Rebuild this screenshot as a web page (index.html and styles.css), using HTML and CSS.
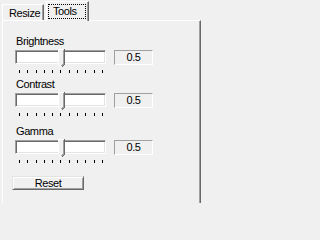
FILE: index.html
```html
<!DOCTYPE html>
<html>
<head>
<meta charset="utf-8">
<link rel="stylesheet" href="styles.css">
</head>
<body>
<div class="tabs">
  <div class="tab">Resize</div>
  <div class="tab active"><span class="focus">Tools</span></div>
</div>
<div class="panel">
  <div class="group g1">
    <div class="label">Brightness</div>
    <div class="row">
      <div class="track">
        <svg class="thumb" width="7" height="19" viewBox="0 0 7 19">
          <polygon points="0,0 7,0 7,15 3.5,18.5 0,15" fill="#f0f0f0"/>
          <path d="M0.5 15V0.5H6" stroke="#fff" fill="none"/>
          <path d="M0.5 15.5L3 18" stroke="#fff" fill="none"/>
          <path d="M5.5 1V15L3.5 17" stroke="#a0a0a0" fill="none"/>
          <path d="M6.5 0V15.5L3.5 18.5" stroke="#696969" fill="none"/>
        </svg>
      </div>
      <div class="value">0.5</div>
    </div>
    <div class="ticks"><i></i><i></i><i></i><i></i><i></i><i></i><i></i><i></i><i></i><i></i><i></i></div>
  </div>
  <div class="group g2">
    <div class="label">Contrast</div>
    <div class="row">
      <div class="track">
        <svg class="thumb" width="7" height="19" viewBox="0 0 7 19">
          <polygon points="0,0 7,0 7,15 3.5,18.5 0,15" fill="#f0f0f0"/>
          <path d="M0.5 15V0.5H6" stroke="#fff" fill="none"/>
          <path d="M0.5 15.5L3 18" stroke="#fff" fill="none"/>
          <path d="M5.5 1V15L3.5 17" stroke="#a0a0a0" fill="none"/>
          <path d="M6.5 0V15.5L3.5 18.5" stroke="#696969" fill="none"/>
        </svg>
      </div>
      <div class="value">0.5</div>
    </div>
    <div class="ticks"><i></i><i></i><i></i><i></i><i></i><i></i><i></i><i></i><i></i><i></i><i></i></div>
  </div>
  <div class="group g3">
    <div class="label">Gamma</div>
    <div class="row">
      <div class="track">
        <svg class="thumb" width="7" height="19" viewBox="0 0 7 19">
          <polygon points="0,0 7,0 7,15 3.5,18.5 0,15" fill="#f0f0f0"/>
          <path d="M0.5 15V0.5H6" stroke="#fff" fill="none"/>
          <path d="M0.5 15.5L3 18" stroke="#fff" fill="none"/>
          <path d="M5.5 1V15L3.5 17" stroke="#a0a0a0" fill="none"/>
          <path d="M6.5 0V15.5L3.5 18.5" stroke="#696969" fill="none"/>
        </svg>
      </div>
      <div class="value">0.5</div>
    </div>
    <div class="ticks"><i></i><i></i><i></i><i></i><i></i><i></i><i></i><i></i><i></i><i></i><i></i></div>
  </div>
  <button class="btn">Reset</button>
</div>
</body>
</html>
```

FILE: styles.css
```css
html, body {
  margin: 0;
  padding: 0;
  overflow: hidden;
  background: #f0f0f0;
}
body {
  width: 201px;
  height: 203px;
  font-family: "Liberation Sans", Arial, sans-serif;
  font-size: 11px;
  letter-spacing: -0.4px;
  color: #000;
  line-height: 12px;
}
.tabs {
  display: flex;
  align-items: flex-end;
  height: 20px;
  padding-left: 2px;
}
.tab {
  box-sizing: border-box;
  height: 16px;
  width: 42px;
  padding: 2px 0 0 6px;
  border-left: 1px solid #fff;
  border-top: 1px solid #fff;
  border-right: 1px solid #696969;
  box-shadow: inset -1px 0 #a0a0a0;
  background: #f0f0f0;
}
.tab.active {
  position: relative;
  z-index: 1;
  height: 20px;
  width: 43px;
  margin-left: 2px;
  margin-bottom: -1px;
  padding: 2px 0 0 1px;
}
.focus {
  display: block;
  box-sizing: border-box;
  width: 38px;
  border: 1px dotted #000;
  padding: 0 0 1px 4px;
}
.panel {
  box-sizing: border-box;
  margin-left: 2px;
  width: 199px;
  height: 183px;
  border-top: 1px solid #fff;
  border-left: 1px solid #fff;
  border-right: 1px solid #696969;
  box-shadow: inset -1px 0 #a0a0a0;
  padding: 14px 0 0 9px;
  display: flex;
  flex-direction: column;
  align-items: flex-start;
}
.group {
  padding-left: 3px;
}
.g2 { margin-top: 5px; }
.g3 { margin-top: 9px; }
.label {
  padding-left: 1px;
  height: 12px;
}
.row {
  display: flex;
  align-items: flex-start;
  margin-top: 3px;
}
.track {
  position: relative;
  box-sizing: border-box;
  width: 91px;
  height: 14px;
  background: #fff;
  border: 1px solid;
  border-color: #a0a0a0 #fff #fff #a0a0a0;
  box-shadow: inset 1px 1px #696969, inset -1px -1px #e3e3e3;
}
.thumb {
  position: absolute;
  left: 42px;
  top: -2px;
  shape-rendering: crispEdges;
}
.value {
  box-sizing: border-box;
  width: 39px;
  height: 15px;
  margin-left: 8px;
  border: 1px solid;
  border-color: #a0a0a0 #fff #fff #a0a0a0;
  text-align: center;
  line-height: 13px;
}
.ticks {
  display: flex;
  justify-content: space-between;
  width: 84px;
  margin: 5px 0 0 4px;
}
.ticks i {
  display: block;
  width: 1px;
  height: 3px;
  background: #000;
}
.btn {
  box-sizing: border-box;
  margin-top: 13px;
  width: 72px;
  height: 14px;
  padding: 0;
  font: inherit;
  letter-spacing: inherit;
  line-height: 12px;
  color: #000;
  background: #f0f0f0;
  border: 1px solid;
  border-color: #e3e3e3 #696969 #696969 #e3e3e3;
  box-shadow: inset 1px 1px #fff, inset -1px -1px #a0a0a0;
  border-radius: 0;
}
```
